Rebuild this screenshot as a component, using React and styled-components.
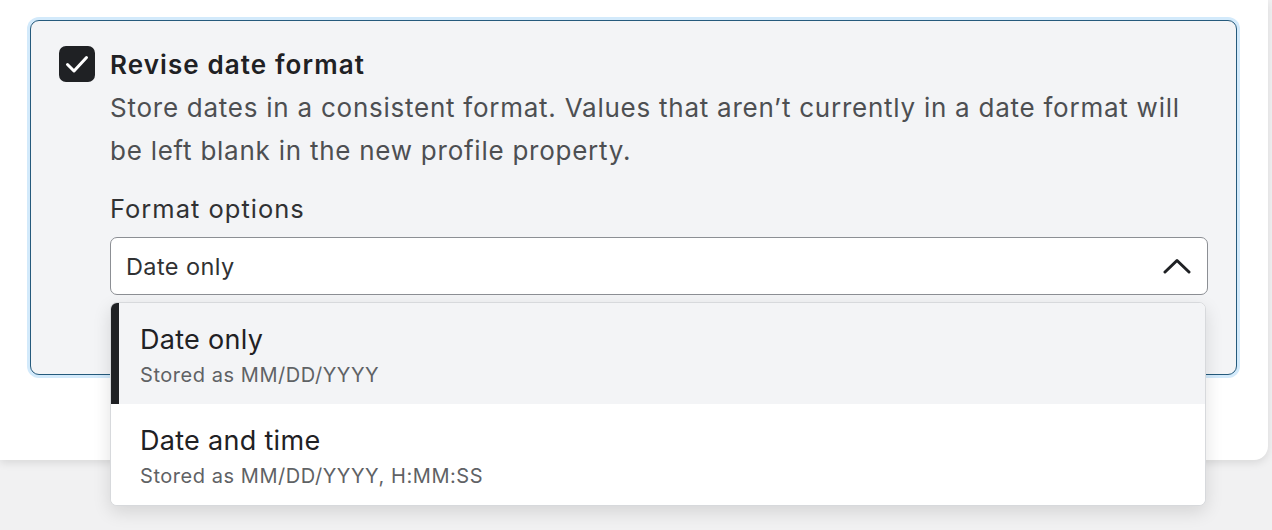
import React from "react";
import styled, { createGlobalStyle } from "styled-components";

const Global = createGlobalStyle`
  html, body { margin: 0; padding: 0; }
  body {
    background: #f1f1f2;
    font-family: Inter, "Noto Sans", sans-serif;
    width: 1272px;
    height: 530px;
    overflow: hidden;
  }
`;

const Card = styled.div`
  position: relative;
  width: 1268px;
  height: 460px;
  box-sizing: border-box;
  background: #ffffff;
  border-radius: 0 0 14px 0;
  box-shadow: 0 3px 8px rgba(0, 0, 0, 0.1);
  padding: 20px 0 0 30px;
`;

const Panel = styled.div`
  width: 1207px;
  height: 355px;
  box-sizing: border-box;
  background: #f3f4f6;
  border: 1px solid #255a7c;
  border-radius: 9px;
  box-shadow: 0 0 0 3px #d3eafb;
  padding: 25px 28px 0 28px;
  display: flex;
  gap: 15px;
`;

const Checkbox = styled.div`
  flex: none;
  width: 36px;
  height: 36px;
  border-radius: 7px;
  background: #1f2124;
  display: flex;
  align-items: center;
  justify-content: center;
`;

const Content = styled.div`
  flex: 1;
  display: flex;
  flex-direction: column;
  position: relative;
`;

const Title = styled.div`
  font-size: 26px;
  font-weight: 600;
  color: #1f2124;
  line-height: 38px;
  letter-spacing: 1.1px;
`;

const Description = styled.p`
  margin: 2px 0 0;
  font-size: 26px;
  line-height: 43px;
  color: #4d4f52;
  letter-spacing: 0.75px;
`;

const Label = styled.div`
  margin-top: 21px;
  font-size: 25.5px;
  line-height: 32px;
  color: #303133;
  letter-spacing: 1px;
`;

const Select = styled.div`
  margin-top: 12px;
  height: 58px;
  box-sizing: border-box;
  background: #ffffff;
  border: 1px solid #8c8f94;
  border-radius: 7px;
  display: flex;
  align-items: center;
  justify-content: space-between;
  padding: 0 16px 0 15px;
  font-size: 23.5px;
  color: #303133;
  letter-spacing: 0.4px;
`;

const Menu = styled.div`
  position: absolute;
  left: 0;
  top: 256px;
  width: 1096px;
  box-sizing: border-box;
  background: #ffffff;
  border: 1px solid #d7d9dc;
  border-radius: 7px;
  overflow: hidden;
  box-shadow: 0 6px 18px rgba(0, 0, 0, 0.12);
`;

const Option = styled.div`
  height: 101px;
  box-sizing: border-box;
  padding: 19px 0 0 21px;
  background: ${(p) => (p.$active ? "#f3f4f6" : "#ffffff")};
  border-left: 8px solid ${(p) => (p.$active ? "#1f2124" : "transparent")};
  display: flex;
  flex-direction: column;
`;

const OptionTitle = styled.div`
  font-size: 27px;
  line-height: 36px;
  color: #1f2124;
  letter-spacing: 0.3px;
`;

const OptionSub = styled.div`
  margin-top: 4px;
  font-size: 20px;
  line-height: 26px;
  color: #5f6265;
  letter-spacing: 0.55px;
`;

const Check = () => (
  <svg width="28" height="28" viewBox="0 0 28 28" fill="none">
    <path d="M4.5 14.5 L11 21 L23.5 7.5" stroke="#fff" strokeWidth="3" strokeLinecap="round" strokeLinejoin="round" />
  </svg>
);

const ChevronUp = () => (
  <svg width="28" height="18" viewBox="0 0 28 18" fill="none">
    <path d="M2 15 L14 3.5 L26 15" stroke="#1f2124" strokeWidth="3" strokeLinecap="round" strokeLinejoin="round" />
  </svg>
);

const options = [
  { title: "Date only", sub: "Stored as MM/DD/YYYY", active: true },
  { title: "Date and time", sub: "Stored as MM/DD/YYYY, H:MM:SS", active: false },
];

export default function App() {
  return (
    <>
      <Global />
      <Card>
        <Panel>
          <Checkbox>
            <Check />
          </Checkbox>
          <Content>
            <Title>Revise date format</Title>
            <Description>
              Store dates in a consistent format. Values that aren’t currently in a date format will be left blank in the new profile property.
            </Description>
            <Label>Format options</Label>
            <Select>
              <span>Date only</span>
              <ChevronUp />
            </Select>
            <Menu>
              {options.map((o) => (
                <Option key={o.title} $active={o.active}>
                  <OptionTitle>{o.title}</OptionTitle>
                  <OptionSub>{o.sub}</OptionSub>
                </Option>
              ))}
            </Menu>
          </Content>
        </Panel>
      </Card>
    </>
  );
}
